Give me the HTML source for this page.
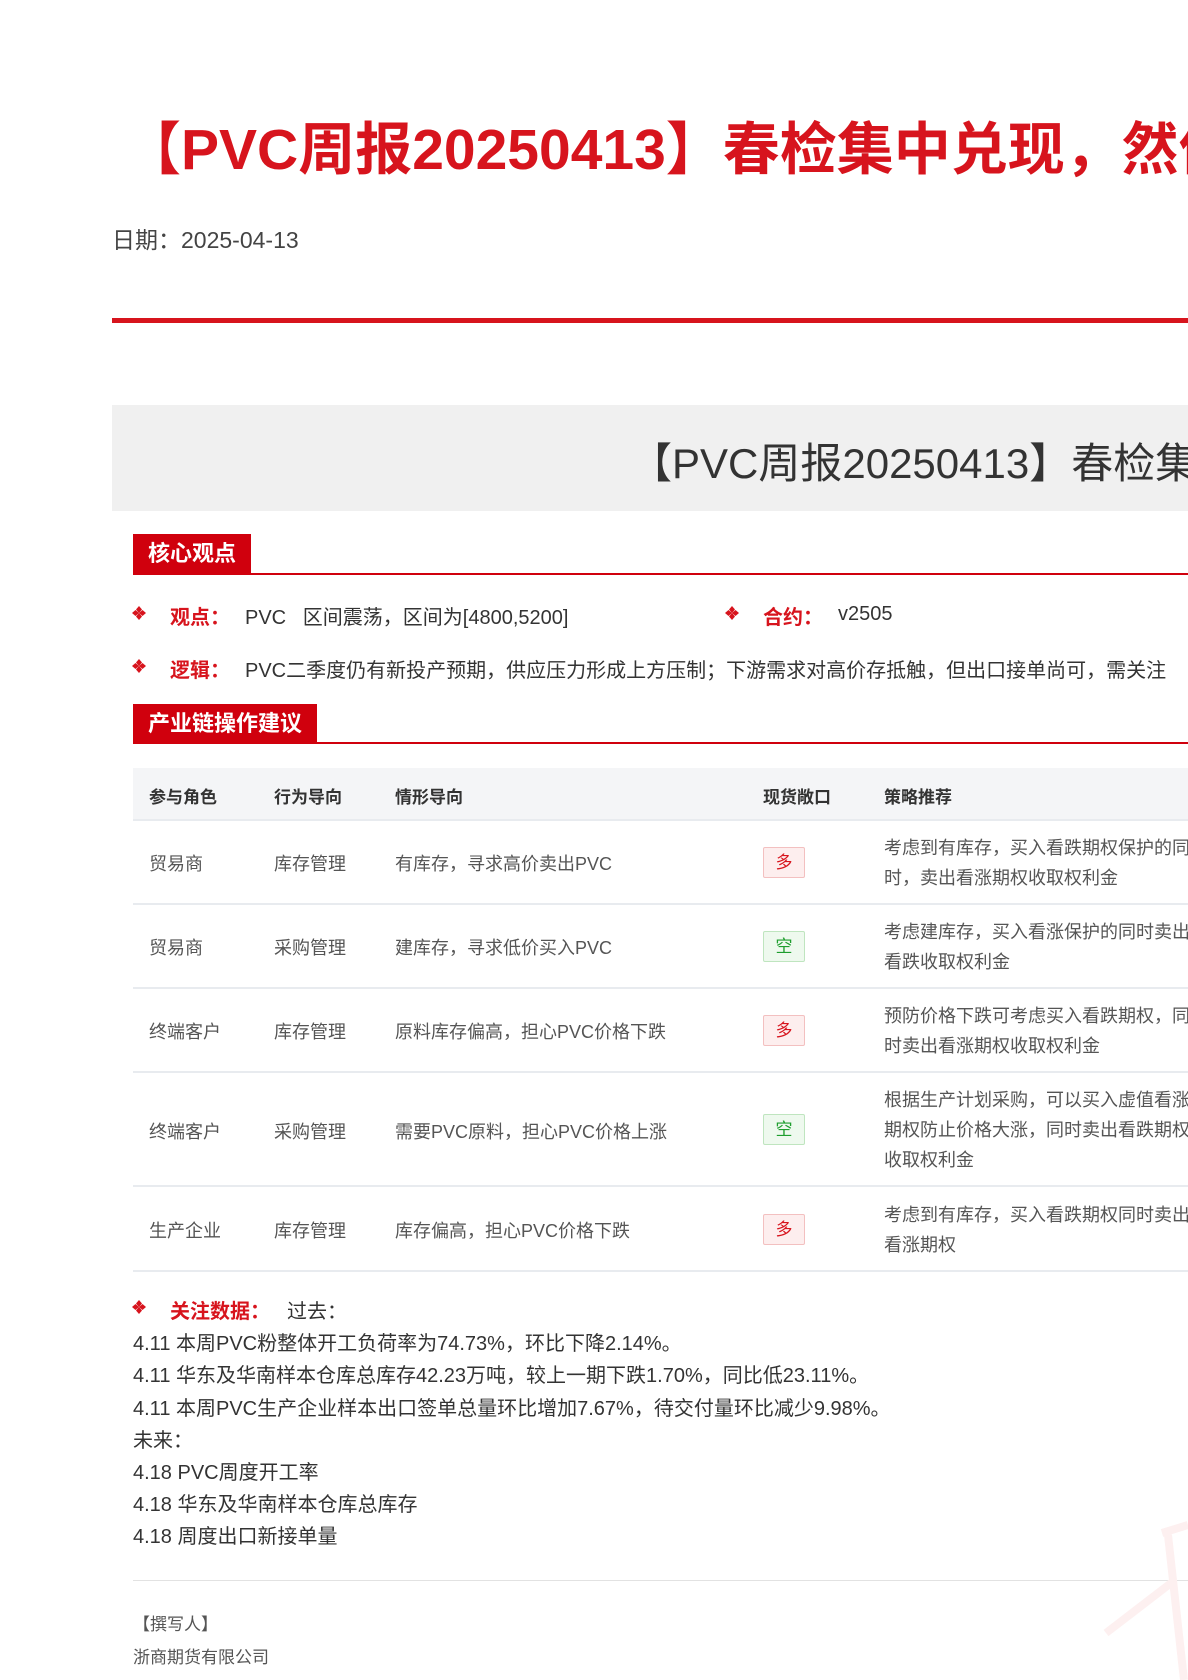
<!DOCTYPE html>
<html><head><meta charset="utf-8">
<style>
html,body{margin:0;padding:0;width:1188px;height:1680px;overflow:hidden;background:#fff;font-family:"Liberation Sans","Noto Sans CJK SC",sans-serif;}
.wrap{position:relative;width:1188px;height:1680px;overflow:hidden;}
.a{position:absolute;white-space:nowrap;}
.red{color:#d7141d;}
.tab{position:absolute;background:#d0000d;color:#fff;font-size:22px;font-weight:bold;line-height:40px;padding:0 15px;}
.dia{position:absolute;width:14px;height:14px;}
.lbl{color:#d7141d;font-size:20px;font-weight:bold;}
.txt{color:#333;font-size:20px;}
.t{color:#555;font-size:18px;}
.th{color:#333;font-size:17px;font-weight:bold;}
.rl{position:absolute;left:133px;width:1055px;height:2px;background:#e8ebef;}
.b{position:absolute;left:763px;width:40px;height:29px;line-height:29px;text-align:center;font-size:17px;border-radius:2px;}
.d{background:#fdeeee;border:1px solid #f3c0c0;color:#d7141d;}
.k{background:#eef9ee;border:1px solid #bfe5bf;color:#1e9e2e;}
.s{color:#555;font-size:18px;line-height:30px;}
.f{color:#333;font-size:20px;}
</style></head><body><div class="wrap">
<div class="a red" style="left:124px;top:104px;font-size:57px;font-weight:bold;">【PVC周报20250413】春检集中兑现，然供应压力仍存</div>
<div class="a" style="left:112px;top:221px;font-size:23px;color:#444;">日期：2025-04-13</div>
<div style="position:absolute;left:112px;top:318px;width:1076px;height:5px;background:#d7141d;"></div>
<div style="position:absolute;left:112px;top:405px;width:1076px;height:106px;background:#f0f0f0;"></div>
<div class="a" style="left:630px;top:430px;font-size:42px;color:#333;">【PVC周报20250413】春检集中兑现，然供应压力仍存</div>

<div class="tab" style="left:133px;top:534px;">核心观点</div>
<div style="position:absolute;left:133px;top:573px;width:1055px;height:2px;background:#d0000d;"></div>
<svg class="dia" style="left:132px;top:606px" viewBox="0 0 14 14"><g fill="#d7141d"><path d="M7 0L10 3.5 7 7 4 3.5Z"/><path d="M7 7L10 10.5 7 14 4 10.5Z"/><path d="M0 7L3.5 4 7 7 3.5 10Z"/><path d="M7 7L10.5 4 14 7 10.5 10Z"/></g></svg>
<div class="a lbl" style="left:170px;top:601px;">观点：</div>
<div class="a txt" style="left:245px;top:601px;">PVC&nbsp;&nbsp;&nbsp;区间震荡，区间为[4800,5200]</div>
<svg class="dia" style="left:725px;top:606px" viewBox="0 0 14 14"><g fill="#d7141d"><path d="M7 0L10 3.5 7 7 4 3.5Z"/><path d="M7 7L10 10.5 7 14 4 10.5Z"/><path d="M0 7L3.5 4 7 7 3.5 10Z"/><path d="M7 7L10.5 4 14 7 10.5 10Z"/></g></svg>
<div class="a lbl" style="left:763px;top:601px;">合约：</div>
<div class="a txt" style="left:838px;top:603px;">v2505</div>
<svg class="dia" style="left:132px;top:659px" viewBox="0 0 14 14"><g fill="#d7141d"><path d="M7 0L10 3.5 7 7 4 3.5Z"/><path d="M7 7L10 10.5 7 14 4 10.5Z"/><path d="M0 7L3.5 4 7 7 3.5 10Z"/><path d="M7 7L10.5 4 14 7 10.5 10Z"/></g></svg>
<div class="a lbl" style="left:170px;top:654px;">逻辑：</div>
<div class="a txt" style="left:245px;top:654px;">PVC二季度仍有新投产预期，供应压力形成上方压制；下游需求对高价存抵触，但出口接单尚可，需关注</div>

<div class="tab" style="left:133px;top:704px;">产业链操作建议</div>
<div style="position:absolute;left:133px;top:742px;width:1055px;height:2px;background:#d0000d;"></div>

<div style="position:absolute;left:133px;top:768px;width:1055px;height:52px;background:#f4f5f7;"></div>
<div class="a th" style="left:149px;top:783px;">参与角色</div>
<div class="a th" style="left:274px;top:783px;">行为导向</div>
<div class="a th" style="left:395px;top:783px;">情形导向</div>
<div class="a th" style="left:763px;top:783px;">现货敞口</div>
<div class="a th" style="left:884px;top:783px;">策略推荐</div>
<div class="rl" style="top:819px;"></div>

<div class="a t" style="left:149px;top:850px;">贸易商</div>
<div class="a t" style="left:274px;top:850px;">库存管理</div>
<div class="a t" style="left:395px;top:850px;">有库存，寻求高价卖出PVC</div>
<div class="b d" style="top:847px;">多</div>
<div class="a s" style="left:884px;top:833px;">考虑到有库存，买入看跌期权保护的同<br>时，卖出看涨期权收取权利金</div>
<div class="rl" style="top:903px;"></div>

<div class="a t" style="left:149px;top:934px;">贸易商</div>
<div class="a t" style="left:274px;top:934px;">采购管理</div>
<div class="a t" style="left:395px;top:934px;">建库存，寻求低价买入PVC</div>
<div class="b k" style="top:931px;">空</div>
<div class="a s" style="left:884px;top:917px;">考虑建库存，买入看涨保护的同时卖出<br>看跌收取权利金</div>
<div class="rl" style="top:987px;"></div>

<div class="a t" style="left:149px;top:1018px;">终端客户</div>
<div class="a t" style="left:274px;top:1018px;">库存管理</div>
<div class="a t" style="left:395px;top:1018px;">原料库存偏高，担心PVC价格下跌</div>
<div class="b d" style="top:1015px;">多</div>
<div class="a s" style="left:884px;top:1001px;">预防价格下跌可考虑买入看跌期权，同<br>时卖出看涨期权收取权利金</div>
<div class="rl" style="top:1071px;"></div>

<div class="a t" style="left:149px;top:1118px;">终端客户</div>
<div class="a t" style="left:274px;top:1118px;">采购管理</div>
<div class="a t" style="left:395px;top:1118px;">需要PVC原料，担心PVC价格上涨</div>
<div class="b k" style="top:1114px;">空</div>
<div class="a s" style="left:884px;top:1085px;">根据生产计划采购，可以买入虚值看涨<br>期权防止价格大涨，同时卖出看跌期权<br>收取权利金</div>
<div class="rl" style="top:1185px;"></div>

<div class="a t" style="left:149px;top:1217px;">生产企业</div>
<div class="a t" style="left:274px;top:1217px;">库存管理</div>
<div class="a t" style="left:395px;top:1217px;">库存偏高，担心PVC价格下跌</div>
<div class="b d" style="top:1214px;">多</div>
<div class="a s" style="left:884px;top:1200px;">考虑到有库存，买入看跌期权同时卖出<br>看涨期权</div>
<div class="rl" style="top:1270px;"></div>

<svg class="dia" style="left:132px;top:1300px" viewBox="0 0 14 14"><g fill="#d7141d"><path d="M7 0L10 3.5 7 7 4 3.5Z"/><path d="M7 7L10 10.5 7 14 4 10.5Z"/><path d="M0 7L3.5 4 7 7 3.5 10Z"/><path d="M7 7L10.5 4 14 7 10.5 10Z"/></g></svg>
<div class="a lbl" style="left:170px;top:1295px;">关注数据：</div>
<div class="a f" style="left:287px;top:1295px;">过去：</div>
<div class="a f" style="left:133px;top:1327px;">4.11 本周PVC粉整体开工负荷率为74.73%，环比下降2.14%。</div>
<div class="a f" style="left:133px;top:1359px;">4.11 华东及华南样本仓库总库存42.23万吨，较上一期下跌1.70%，同比低23.11%。</div>
<div class="a f" style="left:133px;top:1392px;">4.11 本周PVC生产企业样本出口签单总量环比增加7.67%，待交付量环比减少9.98%。</div>
<div class="a f" style="left:133px;top:1424px;">未来：</div>
<div class="a f" style="left:133px;top:1456px;">4.18 PVC周度开工率</div>
<div class="a f" style="left:133px;top:1488px;">4.18 华东及华南样本仓库总库存</div>
<div class="a f" style="left:133px;top:1520px;">4.18 周度出口新接单量</div>

<div style="position:absolute;left:133px;top:1580px;width:1055px;height:1px;background:#e2e2e2;"></div>
<div class="a" style="left:133px;top:1610px;font-size:17px;color:#555;">【撰写人】</div>
<div class="a" style="left:133px;top:1643px;font-size:17px;color:#555;">浙商期货有限公司</div>
<div class="a" style="left:133px;top:1675px;font-size:17px;color:#555;">王填（Z0012203）</div>

<svg style="position:absolute;left:1100px;top:1500px" width="88" height="180"><path d="M62 33 L88 25 M68 35 L84 180 M6 133 L75 80" stroke="#fdf0f0" stroke-width="8" fill="none"/></svg>
</div></body></html>
